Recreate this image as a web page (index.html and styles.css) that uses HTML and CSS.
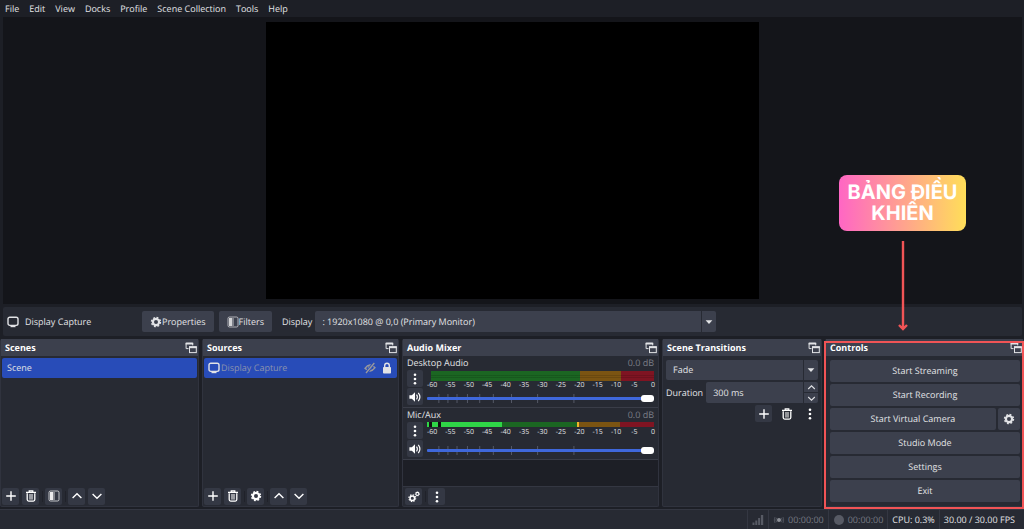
FILE: index.html
```html
<!DOCTYPE html>
<html lang="vi">
<head>
<meta charset="utf-8">
<meta name="viewport" content="width=device-width, initial-scale=1">
<title>OBS Studio</title>
<link rel="stylesheet" href="styles.css">
</head>
<body>
<svg class="sprite" aria-hidden="true">
  <symbol id="monitor" viewBox="0 0 12 12"><rect x="1" y="1.2" width="10" height="8.2" rx="1.8" fill="none" stroke="currentColor" stroke-width="1.4"/><path d="M3.5 10h5v1.2h-5z" fill="currentColor"/></symbol>
  <symbol id="gear" viewBox="0 0 12 12"><circle cx="6" cy="6" r="3.1" fill="none" stroke="currentColor" stroke-width="2.2"/><circle cx="6" cy="6" r="4.5" fill="none" stroke="currentColor" stroke-width="1.4" stroke-dasharray="1.9 1.634"/></symbol>
  <symbol id="filter" viewBox="0 0 12 12"><rect x="1" y="1" width="10" height="10" rx="1.5" fill="none" stroke="currentColor" stroke-width="1" opacity=".7"/><path d="M2 2h3v8H2z" fill="currentColor" opacity=".9"/><path d="M5 2h2v8H5z" fill="currentColor" opacity=".4"/></symbol>
  <symbol id="float" viewBox="0 0 12 12"><path d="M3.5 6.6H1.1V1.2h6.6v2.2" fill="none" stroke="currentColor" stroke-width="1"/><path d="M.6.7h7.6v1.8H.6z" fill="currentColor"/><rect x="4.5" y="5" width="6.8" height="5.6" fill="none" stroke="currentColor" stroke-width="1"/><path d="M4 4.2h7.8v2H4z" fill="currentColor"/></symbol>
  <symbol id="plus" viewBox="0 0 12 12"><path d="M6 1.2v9.6M1.2 6h9.6" stroke="currentColor" stroke-width="1.4"/></symbol>
  <symbol id="trash" viewBox="0 0 12 12"><path d="M1 2.4h10M4.2 2V.9h3.6V2" fill="none" stroke="currentColor" stroke-width="1.2"/><path d="M2.2 3.2v6.4q0 1.5 1.5 1.5h4.6q1.5 0 1.5-1.5V3.2" fill="none" stroke="currentColor" stroke-width="1.3"/><path d="M4 4h4v5.6H4z" fill="currentColor" opacity=".5"/></symbol>
  <symbol id="up" viewBox="0 0 12 12"><path d="M1.6 8 6 3.8 10.4 8" fill="none" stroke="currentColor" stroke-width="1.4"/></symbol>
  <symbol id="down" viewBox="0 0 12 12"><path d="M1.6 4 6 8.2 10.4 4" fill="none" stroke="currentColor" stroke-width="1.4"/></symbol>
  <symbol id="caret" viewBox="0 0 12 12"><path d="M2.6 4.3h6.8L6 8z" fill="currentColor"/></symbol>
  <symbol id="dots" viewBox="0 0 12 12"><g fill="currentColor"><circle cx="6" cy="1.7" r="1.3"/><circle cx="6" cy="6" r="1.3"/><circle cx="6" cy="10.3" r="1.3"/></g></symbol>
  <symbol id="speaker" viewBox="0 0 12 12"><path d="M.4 4.2h2.4L6 1.2v9.6L2.8 7.8H.4z" fill="currentColor"/><path d="M7.5 3.7q1.7 2.3 0 4.6M9.3 1.9q3.2 4.1 0 8.2" fill="none" stroke="currentColor" stroke-width="1.2"/></symbol>
  <symbol id="gears" viewBox="0 0 12 12"><circle cx="4.3" cy="7.2" r="2.3" fill="none" stroke="currentColor" stroke-width="1.5"/><circle cx="4.3" cy="7.2" r="3.4" fill="none" stroke="currentColor" stroke-width="1.1" stroke-dasharray="1.4 1.27"/><circle cx="9.4" cy="2.9" r="1.5" fill="none" stroke="currentColor" stroke-width="1.1"/><circle cx="9.4" cy="2.9" r="2.1" fill="none" stroke="currentColor" stroke-width=".7" stroke-dasharray=".9 .75"/></symbol>
  <symbol id="hidden" viewBox="0 0 12 12"><path d="M1 6.3Q5.7 0 11 5.7 6.3 12 1 6.3z" fill="none" stroke="currentColor" stroke-width="1.4"/><circle cx="5.6" cy="6" r="1.9" fill="currentColor"/><path d="M2.3 10.8 10 1.3" stroke="#284cb8" stroke-width="3"/><path d="M2 11 10.3 1" stroke="currentColor" stroke-width="1.3"/></symbol>
  <symbol id="lock" viewBox="0 0 12 12"><rect x="2" y="5" width="8" height="6.5" rx=".8" fill="currentColor"/><path d="M3.7 5.5V3.6q0-2.3 2.3-2.3t2.3 2.3v1.9" fill="none" stroke="currentColor" stroke-width="1.4"/></symbol>
  <symbol id="signal" viewBox="0 0 12 12"><path d="M.5 8.500h2V11h-2zM3.300 6.500h2V11h-2zM6.100 4h2v7h-2zM8.900 1h2.300v10H8.900z" fill="currentColor"/></symbol>
  <symbol id="cast" viewBox="0 0 12 12"><circle cx="6" cy="6" r="2" fill="#8c8f97"/><path d="M3.600 3.800q-1.400 2.200 0 4.400M8.400 3.800q1.400 2.200 0 4.400M2 3q-1.400 3 0 6M10 3q1.400 3 0 6" fill="none" stroke="currentColor" stroke-width=".8"/></symbol>
  <symbol id="dot" viewBox="0 0 12 12"><circle cx="6" cy="6" r="5" fill="currentColor"/></symbol>
</svg>

<nav class="menu">
  <a href="#">File</a><a href="#">Edit</a><a href="#">View</a><a href="#">Docks</a><a href="#">Profile</a><a href="#">Scene Collection</a><a href="#">Tools</a><a href="#">Help</a>
</nav>

<main class="preview">
  <div class="canvas"></div>
  <div class="callout">
    <strong class="callout-label">BẢNG ĐIỀU KHIỂN</strong>
    <svg class="callout-arrow" viewBox="0 0 12 92" aria-hidden="true"><path d="M6 1v87M2 85l4 4 4-4" fill="none" stroke="#f15456" stroke-width="2.4"/></svg>
  </div>
</main>

<section class="context" aria-label="Source toolbar">
  <div class="context-source"><svg class="icon"><use href="#monitor"/></svg>Display Capture</div>
  <button class="btn"><svg class="icon"><use href="#gear"/></svg>Properties</button>
  <button class="btn"><svg class="icon"><use href="#filter"/></svg>Filters</button>
  <label class="context-label" for="display">Display</label>
  <div class="combo combo-display"><select id="display"><option>: 1920x1080 @ 0,0 (Primary Monitor)</option></select><span class="combo-arrow"><svg class="icon"><use href="#caret"/></svg></span></div>
</section>

<div class="docks">
  <section class="dock">
    <header class="dock-title"><h2>Scenes</h2><button class="plain" aria-label="Float scenes"><svg class="icon"><use href="#float"/></svg></button></header>
    <ul class="list"><li class="item">Scene</li></ul>
    <footer class="tools">
      <button class="tool" aria-label="Add scene"><svg class="icon"><use href="#plus"/></svg></button>
      <button class="tool" aria-label="Remove scene"><svg class="icon"><use href="#trash"/></svg></button>
      <i class="sep"></i>
      <button class="tool" aria-label="Scene filters"><svg class="icon"><use href="#filter"/></svg></button>
      <i class="sep"></i>
      <button class="tool" aria-label="Move scene up"><svg class="icon"><use href="#up"/></svg></button>
      <button class="tool" aria-label="Move scene down"><svg class="icon"><use href="#down"/></svg></button>
    </footer>
  </section>

  <section class="dock">
    <header class="dock-title"><h2>Sources</h2><button class="plain" aria-label="Float sources"><svg class="icon"><use href="#float"/></svg></button></header>
    <ul class="list"><li class="item item-source"><svg class="icon"><use href="#monitor"/></svg><span class="item-name">Display Capture</span><button class="plain muted" aria-label="Show source"><svg class="icon"><use href="#hidden"/></svg></button><button class="plain" aria-label="Unlock source"><svg class="icon"><use href="#lock"/></svg></button></li></ul>
    <footer class="tools">
      <button class="tool" aria-label="Add source"><svg class="icon"><use href="#plus"/></svg></button>
      <button class="tool" aria-label="Remove source"><svg class="icon"><use href="#trash"/></svg></button>
      <i class="sep"></i>
      <button class="tool" aria-label="Source properties"><svg class="icon"><use href="#gear"/></svg></button>
      <i class="sep"></i>
      <button class="tool" aria-label="Move source up"><svg class="icon"><use href="#up"/></svg></button>
      <button class="tool" aria-label="Move source down"><svg class="icon"><use href="#down"/></svg></button>
    </footer>
  </section>

  <section class="dock">
    <header class="dock-title"><h2>Audio Mixer</h2><button class="plain" aria-label="Float mixer"><svg class="icon"><use href="#float"/></svg></button></header>
    <div class="mixer">
      <div class="channel">
        <div class="channel-head"><label for="vol-desktop">Desktop Audio</label><span class="db">0.0 dB</span></div>
        <button class="tool" aria-label="Desktop Audio options"><svg class="icon"><use href="#dots"/></svg></button>
        <div class="levels">
          <div class="meter-stereo"></div>
          <div class="scale"><span>-60</span><span>-55</span><span>-50</span><span>-45</span><span>-40</span><span>-35</span><span>-30</span><span>-25</span><span>-20</span><span>-15</span><span>-10</span><span>-5</span><span>0</span></div>
        </div>
        <button class="tool" aria-label="Mute Desktop Audio"><svg class="icon"><use href="#speaker"/></svg></button>
        <div class="fader">
          <svg class="notches" aria-hidden="true"><g fill="#555967"><rect x="5%" width="1" height="9"/><rect x="9%" width="1" height="9"/><rect x="13%" width="1" height="9"/><rect x="17.6%" width="1" height="9"/><rect x="23%" width="1" height="9"/><rect x="29%" width="1" height="9"/><rect x="37%" width="1" height="9"/><rect x="48.5%" width="1" height="9"/><rect x="64.5%" width="1" height="9"/></g></svg>
          <input type="range" id="vol-desktop" min="0" max="100" value="100">
        </div>
      </div>
      <div class="channel">
        <div class="channel-head"><label for="vol-mic">Mic/Aux</label><span class="db">0.0 dB</span></div>
        <button class="tool" aria-label="Mic/Aux options"><svg class="icon"><use href="#dots"/></svg></button>
        <div class="levels">
          <div class="meter-mono"></div>
          <div class="scale"><span>-60</span><span>-55</span><span>-50</span><span>-45</span><span>-40</span><span>-35</span><span>-30</span><span>-25</span><span>-20</span><span>-15</span><span>-10</span><span>-5</span><span>0</span></div>
        </div>
        <button class="tool" aria-label="Mute Mic/Aux"><svg class="icon"><use href="#speaker"/></svg></button>
        <div class="fader">
          <svg class="notches" aria-hidden="true"><g fill="#555967"><rect x="5%" width="1" height="9"/><rect x="9%" width="1" height="9"/><rect x="13%" width="1" height="9"/><rect x="17.6%" width="1" height="9"/><rect x="23%" width="1" height="9"/><rect x="29%" width="1" height="9"/><rect x="37%" width="1" height="9"/><rect x="48.5%" width="1" height="9"/><rect x="64.5%" width="1" height="9"/></g></svg>
          <input type="range" id="vol-mic" min="0" max="100" value="100">
        </div>
      </div>
    </div>
    <footer class="tools tools-mixer">
      <button class="tool" aria-label="Advanced audio properties"><svg class="icon"><use href="#gears"/></svg></button>
      <i class="sep"></i>
      <button class="tool" aria-label="Mixer menu"><svg class="icon"><use href="#dots"/></svg></button>
    </footer>
  </section>

  <section class="dock">
    <header class="dock-title"><h2>Scene Transitions</h2><button class="plain" aria-label="Float transitions"><svg class="icon"><use href="#float"/></svg></button></header>
    <div class="transitions">
      <div class="combo"><select aria-label="Transition"><option>Fade</option></select><span class="combo-arrow"><svg class="icon"><use href="#caret"/></svg></span></div>
      <div class="duration">
        <label for="duration">Duration</label>
        <div class="spin"><input type="text" id="duration" value="300 ms"><div class="spin-arrows"><button aria-label="Increase duration"><svg class="icon"><use href="#up"/></svg></button><button aria-label="Decrease duration"><svg class="icon"><use href="#down"/></svg></button></div></div>
      </div>
      <div class="transition-tools">
        <button class="tool" aria-label="Add transition"><svg class="icon"><use href="#plus"/></svg></button>
        <button class="tool tool-flat" aria-label="Remove transition"><svg class="icon"><use href="#trash"/></svg></button>
        <button class="tool tool-flat" aria-label="Transition menu"><svg class="icon"><use href="#dots"/></svg></button>
      </div>
    </div>
  </section>

  <section class="dock dock-marked">
    <header class="dock-title"><h2>Controls</h2><button class="plain" aria-label="Float controls"><svg class="icon"><use href="#float"/></svg></button></header>
    <div class="controls">
      <button class="btn">Start Streaming</button>
      <button class="btn">Start Recording</button>
      <div class="controls-split"><button class="btn">Start Virtual Camera</button><button class="btn" aria-label="Virtual camera settings"><svg class="icon"><use href="#gear"/></svg></button></div>
      <button class="btn">Studio Mode</button>
      <button class="btn">Settings</button>
      <button class="btn">Exit</button>
    </div>
  </section>
</div>

<footer class="status">
  <span class="status-cell dim"><svg class="icon"><use href="#signal"/></svg></span>
  <span class="status-cell dim"><svg class="icon"><use href="#cast"/></svg>00:00:00</span>
  <span class="status-cell dim"><svg class="icon"><use href="#dot"/></svg>00:00:00</span>
  <span class="status-cell">CPU: 0.3%</span>
  <span class="status-cell">30.00 / 30.00 FPS</span>
</footer>
</body>
</html>
```

FILE: styles.css
```css
:root {
  --window: #1d1f26;
  --panel: #272a33;
  --raised: #3c404d;
  --text: #e2e3e6;
  --accent: #284cb8;
  --mark: #f15456;
}

* { box-sizing: border-box; }

body {
  margin: 0;
  min-height: 100vh;
  display: flex;
  flex-direction: column;
  background: var(--window);
  color: var(--text);
  font: 9px/12px "Open Sans", "Noto Sans", sans-serif;
  text-rendering: geometricPrecision;
}

button, input, select {
  font: inherit;
  color: inherit;
  text-rendering: inherit;
  border: 0;
  margin: 0;
  padding: 0;
  background: none;
}

.sprite { position: absolute; width: 0; height: 0; }
.icon { width: 12px; height: 12px; flex: none; display: block; }

.menu { display: flex; gap: 10px; padding: 3px 5px 2px; }
.menu a { color: inherit; text-decoration: none; }

.preview {
  flex: 1;
  position: relative;
  display: flex;
  align-items: center;
  justify-content: center;
  margin: 0 2px 3px 3px;
  background: #14151a;
}
.canvas { width: 48.3%; aspect-ratio: 16 / 9; background: #000; }

/* Annotation lying over the window */
.callout {
  position: absolute;
  right: 56px;
  bottom: -28px;
  z-index: 2;
  width: 127px;
  display: flex;
  flex-direction: column;
  align-items: center;
  gap: 9px;
}
.callout-label {
  width: 100%;
  padding: 7px 4px;
  border-radius: 8px;
  background: linear-gradient(90deg, #ff66c4, #ffde59);
  color: #fff;
  font: 700 20px/21px Inter, sans-serif;
  text-align: center;
}
.callout-arrow { width: 12px; height: 92px; }

.btn {
  display: flex;
  align-items: center;
  justify-content: center;
  height: 22px;
  border-radius: 2px;
  background: var(--raised);
}

.context {
  display: flex;
  align-items: center;
  margin: 0 2px 3px 3px;
  padding: 4px;
  background: var(--panel);
  border-radius: 2px;
}
.context-source { display: flex; align-items: center; gap: 6px; width: 135px; }
.context .btn { height: 21px; padding: 0 8px; margin-right: 5px; }
.context-label { margin: 0 3px 0 5px; }

.combo { display: grid; grid-template-columns: 1fr 15px; height: 21px; background: var(--raised); border-radius: 2px; }
.combo select {
  grid-area: 1 / 1 / 2 / 3;
  appearance: none;
  padding: 0 20px 0 7px;
}
.combo-arrow {
  grid-area: 1 / 2;
  display: grid;
  place-items: center;
  border-left: 1px solid var(--panel);
  pointer-events: none;
}
.combo-display { flex: 0 1 401px; }

.docks {
  display: grid;
  grid-template-columns: 199fr 197fr 257fr 160fr 199fr;
  gap: 3px;
  margin-bottom: 2px;
}
.dock {
  display: flex;
  flex-direction: column;
  min-width: 0;
  min-height: 168px;
  background: var(--panel);
  border: 1px solid #30333e;
  border-top: 0;
  border-radius: 2px;
}
.dock-title {
  display: flex;
  align-items: center;
  justify-content: space-between;
  height: 17px;
  padding: 0 1px 0 4px;
  background: var(--raised);
}
.dock-title h2 { margin: 0; font-size: 9px; font-weight: 700; color: #fff; }
.dock-marked { position: relative; }
.dock-marked::after {
  content: "";
  position: absolute;
  inset: 2px -1px -3px -2px;
  border: 2px solid var(--mark);
  pointer-events: none;
}

.list { flex: 1; list-style: none; margin: 0; padding: 2px 1px; }
.item {
  display: flex;
  align-items: center;
  height: 20px;
  padding: 0 5px;
  border-radius: 2px;
  background: var(--accent);
}
.item-source { gap: 1px; padding: 0 4px; }
.item-name { flex: 1; color: #8b92ad; }
.muted { color: #9b9a9c; margin-right: 4px; }

.tools { display: flex; align-items: center; gap: 3px; height: 20px; padding: 0 1px; }
.tool {
  display: grid;
  place-items: center;
  width: 17px;
  height: 17px;
  border-radius: 2px;
  background: #343844;
  color: #fff;
}
.tool-flat { background: none; }
.sep { width: 1px; height: 11px; background: #20222a; margin-right: -1px; }
.tools-mixer { border-top: 1px solid #343742; padding: 0 2px; }

.mixer { flex: 1; background: var(--window); }
.channel {
  display: grid;
  grid-template-columns: 16px 1fr;
  column-gap: 4px;
  row-gap: 1px;
  padding: 1px 4px 2px;
  border-bottom: 1px solid #3a3d48;
  background: var(--panel);
}
.channel-head { grid-column: 1 / 3; display: flex; justify-content: space-between; }
.db { color: #7b7e87; }
.channel .tool { width: 16px; height: 17px; }

.levels { display: flex; flex-direction: column; height: 17px; }
.meter-stereo {
  flex: none;
  height: 10px;
  margin: 1px 0 1px 4px;
  background:
    linear-gradient(transparent 4px, #0002 4px 5px, transparent 5px 6px, #0002 6px 7px, transparent 7px),
    linear-gradient(90deg, #1b6622 67%, #7b5412 67% 85%, #7f1422 85%);
}
.meter-mono {
  flex: none;
  height: 5px;
  margin-bottom: 2px;
  background: linear-gradient(90deg, #2fd547 0 1%, #111 1% 2%, #2fd547 2% 5%, #111 5% 6%, #2fd547 6% 33%, #1b6622 33% 66%, #f1b52a 66% 67%, #7b5412 67% 85%, #7f1422 85%);
}
.scale {
  display: flex;
  justify-content: space-between;
  margin: 0 1px 0 5px;
  font-size: 7px;
  line-height: 8px;
}
.scale span { display: flex; justify-content: center; width: 0; }

.fader { display: grid; align-items: center; padding-top: 3px; }
.notches { grid-area: 1 / 1; width: 100%; height: 9px; }
.fader input {
  grid-area: 1 / 1;
  appearance: none;
  width: 100%;
  height: 8px;
}
.fader input::-webkit-slider-runnable-track { height: 3px; border-radius: 1px; background: #3f68dc; }
.fader input::-webkit-slider-thumb {
  appearance: none;
  width: 13px;
  height: 7px;
  margin-top: -2px;
  border-radius: 3px;
  background: #fff;
}

.transitions { display: flex; flex-direction: column; gap: 2px; padding: 4px 3px 0; }
.transitions .combo { height: 20px; }
.duration { display: flex; align-items: center; gap: 3px; }
.spin { flex: 1; display: flex; min-width: 0; height: 21px; border-radius: 2px; background: var(--raised); }
.spin input { flex: 1; min-width: 0; padding: 0 7px; }
.spin-arrows { display: grid; width: 15px; border-left: 1px solid var(--panel); }
.spin-arrows button { display: grid; place-items: center; }
.spin-arrows button + button { border-top: 1px solid var(--panel); }
.spin-arrows .icon { width: 9px; height: 9px; }
.transition-tools { display: flex; justify-content: flex-end; gap: 6px; }

.controls { display: flex; flex-direction: column; gap: 2px; padding: 4px 3px 0 4px; }
.controls-split { display: grid; grid-template-columns: 1fr 22px; gap: 2px; }

.status {
  display: flex;
  justify-content: flex-end;
  height: 20px;
  padding-right: 5px;
  border-top: 1px solid #343742;
  background: var(--panel);
}
.status-cell { display: flex; align-items: center; gap: 3px; padding: 0 4px; border-left: 1px solid #343742; }
.dim { color: #777a83; }
.dim .icon { color: #575a64; }
```
